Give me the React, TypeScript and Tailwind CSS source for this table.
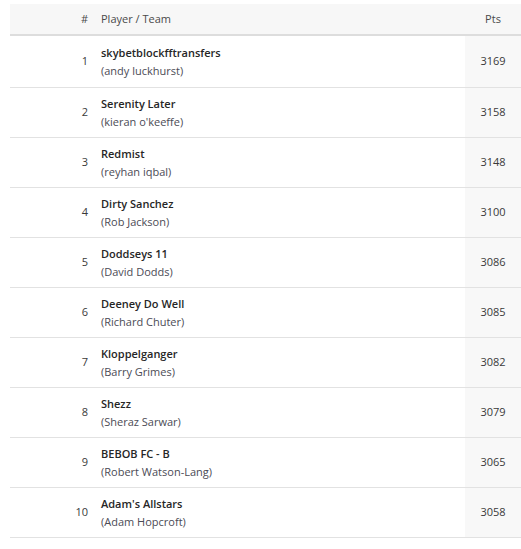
import React from "react";

type Row = { rank: number; team: string; manager: string; pts: number };

const rows: Row[] = [
  { rank: 1, team: "skybetblockfftransfers", manager: "andy luckhurst", pts: 3169 },
  { rank: 2, team: "Serenity Later", manager: "kieran o'keeffe", pts: 3158 },
  { rank: 3, team: "Redmist", manager: "reyhan iqbal", pts: 3148 },
  { rank: 4, team: "Dirty Sanchez", manager: "Rob Jackson", pts: 3100 },
  { rank: 5, team: "Doddseys 11", manager: "David Dodds", pts: 3086 },
  { rank: 6, team: "Deeney Do Well", manager: "Richard Chuter", pts: 3085 },
  { rank: 7, team: "Kloppelganger", manager: "Barry Grimes", pts: 3082 },
  { rank: 8, team: "Shezz", manager: "Sheraz Sarwar", pts: 3079 },
  { rank: 9, team: "BEBOB FC - B", manager: "Robert Watson-Lang", pts: 3065 },
  { rank: 10, team: "Adam's Allstars", manager: "Adam Hopcroft", pts: 3058 },
];

const App: React.FC = () => {
  return (
    <div
      className="min-h-screen bg-white pt-[4px] pl-[10px]"
      style={{ fontFamily: "'Open Sans', Lato, sans-serif" }}
    >
      <div className="grid h-[32px] grid-cols-[85px_1fr_56px] items-center border-b-2 border-[#dddddd] bg-[#f7f7f7] text-[11px] text-[#4a4a4a]">
        <div className="pr-[7px] text-right">#</div>
        <div className="pl-[6px]">Player / Team</div>
        <div className="text-center">Pts</div>
      </div>
      {rows.map((r, i) => (
        <div
          key={r.rank}
          className={`grid grid-cols-[85px_1fr_56px] border-b border-[#e2e2e2] ${
            i === 0 ? "h-[52px]" : "h-[50px]"
          }`}
        >
          <div className="flex items-center justify-end pr-[7px] text-[11px] text-[#3a3a3a]">
            {r.rank}
          </div>
          <div className="flex flex-col justify-center pl-[6px] leading-[18px]">
            <span className="text-[11px] font-semibold text-[#262626]">{r.team}</span>
            <span className="text-[11px] text-[#4b4b55]">({r.manager})</span>
          </div>
          <div className="flex items-center justify-center bg-[#f8f8f8] text-[11px] text-[#3a3a3a]">
            {r.pts}
          </div>
        </div>
      ))}
    </div>
  );
};

export default App;
